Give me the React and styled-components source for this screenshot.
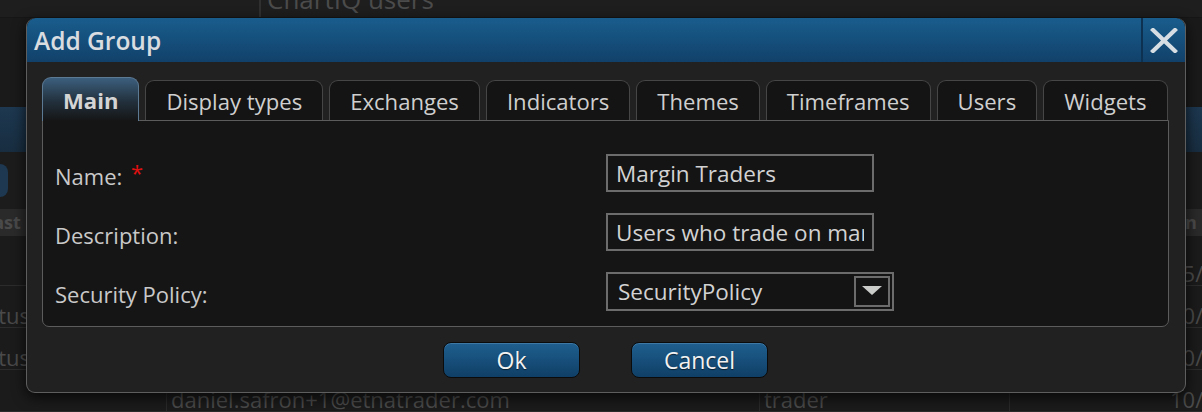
import React from 'react'
import styled, { createGlobalStyle } from 'styled-components'

const GlobalStyle = createGlobalStyle`
  html, body {
    margin: 0;
    padding: 0;
    background: #1b1b1b;
  }
  body {
    font-family: "Open Sans", "Liberation Sans", sans-serif;
  }
`

const tabs = ['Main', 'Display types', 'Exchanges', 'Indicators', 'Themes', 'Timeframes', 'Users', 'Widgets']

const rows = [
  { first: '', mail: '', role: '', date: '15/' },
  { first: 'Status', mail: '', role: '', date: '10/' },
  { first: 'Status', mail: '', role: '', date: '10/' },
  { first: '', mail: 'daniel.safron+1@etnatrader.com', role: 'trader', date: '10/' },
]

function App() {
  return (
    <Page>
      <GlobalStyle />
      <TopStrip>
        <TopCell />
        <TopTitle>ChartIQ users</TopTitle>
      </TopStrip>
      <Gap />
      <BlueBand />
      <Toolbar>
        <GhostButton />
      </Toolbar>
      <HeadRow>
        <HeadCell $w={166} $indent={-17}>Last Name</HeadCell>
        <HeadCell $w={593} />
        <HeadCell $w={401} />
        <HeadCell $w={60} $indent={-12}>Login Up</HeadCell>
      </HeadRow>
      <Rows>
        {rows.map((r, i) => (
          <Row key={i}>
            <Cell $w={166} $indent={-34}>{r.first}</Cell>
            <Cell $w={593} $line>{r.mail}</Cell>
            <Cell $w={250} $line>{r.role}</Cell>
            <Cell $w={151} $line />
            <Cell $w={60} $pad={10}>{r.date}</Cell>
          </Row>
        ))}
      </Rows>

      <Dialog>
        <TitleBar>
          <Title>Add Group</Title>
          <CloseButton aria-label="close">
            <svg width="28" height="25" viewBox="0 0 28 25">
              <path d="M3 2 L25 23 M25 2 L3 23" stroke="#d6dde3" strokeWidth="4.2" strokeLinecap="square" />
            </svg>
          </CloseButton>
        </TitleBar>
        <Body>
          <TabBar>
            {tabs.map((t) => (
              <Tab key={t} $active={t === 'Main'}>{t}</Tab>
            ))}
          </TabBar>
          <Panel>
            <Form>
              <Label>Name: <Req>*</Req></Label>
              <Field><TextBox value="Margin Traders" readOnly /></Field>
              <Label>Description:</Label>
              <Field><TextBox value="Users who trade on margin" readOnly /></Field>
              <Label>Security Policy:</Label>
              <Field>
                <Select>
                  <SelectText>SecurityPolicy</SelectText>
                  <DropButton>
                    <svg width="20" height="10" viewBox="0 0 20 10">
                      <path d="M0 0 H20 L10 9 Z" fill="#c9ccc9" />
                    </svg>
                  </DropButton>
                </Select>
              </Field>
            </Form>
          </Panel>
          <Actions>
            <Button>Ok</Button>
            <Button>Cancel</Button>
          </Actions>
        </Body>
      </Dialog>
    </Page>
  )
}

export default App

const Page = styled.div`
  position: relative;
  width: 1202px;
  height: 412px;
  overflow: hidden;
  background: #1b1b1b;
  display: flex;
  flex-direction: column;
`
const TopStrip = styled.div`
  height: 18px;
  display: flex;
  background: #1e1e1e;
  border-bottom: 1px solid #161616;
  overflow: hidden;
`
const TopCell = styled.div`
  width: 259px;
  border-right: 2px solid #303030;
`
const TopTitle = styled.div`
  margin-top: -16px;
  padding-left: 6px;
  font-size: 26px;
  line-height: 30px;
  color: #4b4b4b;
`
const Gap = styled.div`
  height: 94px;
  background: #1a1a1a;
`
const BlueBand = styled.div`
  height: 47px;
  background: linear-gradient(#1d3850, #182d40);
`
const Toolbar = styled.div`
  height: 60px;
  display: flex;
  align-items: flex-start;
  padding-top: 12px;
  box-sizing: border-box;
  background: #1c1c1c;
`
const GhostButton = styled.div`
  width: 28px;
  height: 33px;
  margin-left: -20px;
  border-radius: 8px;
  background: #1d3850;
`
const HeadRow = styled.div`
  height: 27px;
  display: flex;
  background: #2a2a2a;
  margin-bottom: 8px;
`
const HeadCell = styled.div`
  flex: 0 0 ${(p) => p.$w}px;
  overflow: hidden;
  white-space: nowrap;
  text-indent: ${(p) => p.$indent || 0}px;
  font-size: 18px;
  font-weight: 700;
  line-height: 27px;
  color: #4a4a4a;
`
const Rows = styled.div`
  display: flex;
  flex-direction: column;
`
const Row = styled.div`
  height: 42px;
  display: flex;
  border-bottom: 1px solid #2c2c2c;
  box-sizing: border-box;
`
const Cell = styled.div`
  flex: 0 0 ${(p) => p.$w}px;
  overflow: hidden;
  white-space: nowrap;
  text-indent: ${(p) => p.$indent || 0}px;
  padding-left: ${(p) => p.$pad ?? (p.$line ? 4 : 0)}px;
  padding-top: 8px;
  box-sizing: border-box;
  border-left: ${(p) => (p.$line ? '1px solid #2a2a2a' : 'none')};
  font-size: 22px;
  line-height: 42px;
  color: #4a4a4a;
`

const Dialog = styled.div`
  position: absolute;
  left: 26px;
  top: 18px;
  width: 1160px;
  height: 375px;
  box-sizing: border-box;
  background: #212121;
  border: 1px solid #5e5e5e;
  border-top: none;
  border-radius: 9px;
  box-shadow: 0 4px 14px rgba(0, 0, 0, 0.75);
  display: flex;
  flex-direction: column;
  overflow: hidden;
`
const TitleBar = styled.div`
  height: 44px;
  flex: 0 0 44px;
  display: flex;
  align-items: center;
  background: linear-gradient(#195d8d, #11416a);
  border-radius: 9px 9px 0 0;
`
const Title = styled.div`
  flex: 1;
  padding-left: 7px;
  font-size: 24.5px;
  font-weight: 600;
  color: #d9dde0;
`
const CloseButton = styled.div`
  width: 44px;
  height: 44px;
  display: flex;
  align-items: center;
  justify-content: center;
  border-left: 2px solid #0d3150;
  box-sizing: border-box;
`
const Body = styled.div`
  flex: 1;
  padding: 15px 16px 0 15px;
  display: flex;
  flex-direction: column;
`
const TabBar = styled.div`
  height: 43px;
  display: flex;
  align-items: flex-end;
  gap: 6px;
  position: relative;
  z-index: 1;
`
const Tab = styled.div`
  height: ${(p) => (p.$active ? 44 : 40)}px;
  margin-bottom: ${(p) => (p.$active ? -1 : 0)}px;
  padding: 0 20px;
  box-sizing: border-box;
  display: flex;
  align-items: center;
  border: 1px solid ${(p) => (p.$active ? '#5d7a94' : '#464646')};
  border-bottom: none;
  border-radius: 9px 9px 0 0;
  background: ${(p) => (p.$active ? 'linear-gradient(#3c5f7e, #22303c 55%, #151515)' : '#141414')};
  font-size: 22.1px;
  font-weight: ${(p) => (p.$active ? 700 : 400)};
  color: ${(p) => (p.$active ? '#d4d4d4' : '#cfcfcf')};
  white-space: nowrap;
`
const Panel = styled.div`
  height: 207px;
  box-sizing: border-box;
  background: #151515;
  border: 1px solid #5c5c5c;
  border-radius: 0 0 7px 7px;
  padding: 33px 0 0 12px;
`
const Form = styled.div`
  display: grid;
  grid-template-columns: 551px auto;
  grid-auto-rows: 38px;
  row-gap: 21px;
  align-items: center;
`
const Label = styled.div`
  padding-top: 6px;
  font-size: 22px;
  color: #c9c9c9;
`
const Req = styled.span`
  color: #e01010;
  position: relative;
  top: -4px;
  margin-left: 3px;
`
const Field = styled.div`
  display: flex;
  align-items: center;
  height: 38px;
`
const TextBox = styled.input`
  width: 268px;
  height: 38px;
  box-sizing: border-box;
  border: 2px solid #6c6c6c;
  background: #141414;
  color: #d2d2d2;
  font-family: "Open Sans", "Liberation Sans", sans-serif;
  font-size: 22.5px;
  padding: 0 8px;
  outline: none;
`
const Select = styled.div`
  width: 288px;
  height: 39px;
  box-sizing: border-box;
  border: 2px solid #6c6c6c;
  background: #141414;
  display: flex;
  align-items: center;
  justify-content: space-between;
  padding: 0 2px 0 10px;
`
const SelectText = styled.span`
  font-size: 22.5px;
  color: #d2d2d2;
`
const DropButton = styled.div`
  width: 36px;
  height: 31px;
  box-sizing: border-box;
  border: 2px solid #6c6c6c;
  display: flex;
  align-items: center;
  justify-content: center;
`
const Actions = styled.div`
  display: flex;
  justify-content: center;
  gap: 51px;
  padding-top: 15px;
`
const Button = styled.div`
  width: 137px;
  height: 36px;
  box-sizing: border-box;
  border-radius: 8px;
  border: 1px solid #0b0b0b;
  box-shadow: inset 0 1px 0 rgba(120, 170, 210, 0.35);
  background: linear-gradient(#1f5f8f, #0f3f66);
  display: flex;
  align-items: center;
  justify-content: center;
  font-size: 23px;
  color: #f2f2f2;
  text-shadow: 0 1px 1px rgba(0, 0, 0, 0.6);
`
